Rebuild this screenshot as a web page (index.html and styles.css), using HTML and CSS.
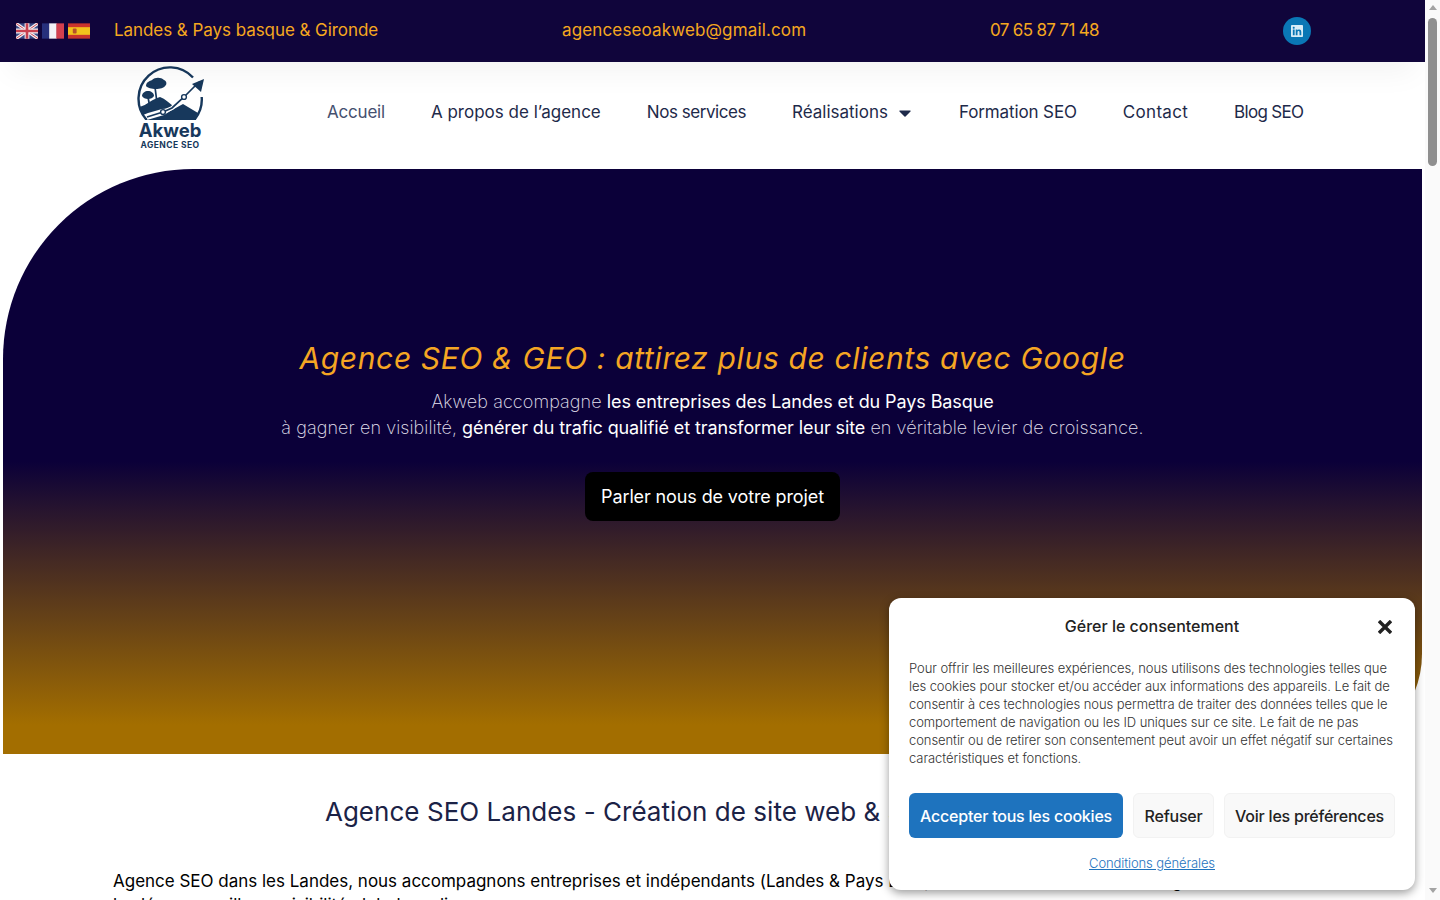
FILE: index.html
```html
<!DOCTYPE html>
<html lang="fr">
<head>
<meta charset="utf-8">
<title>Agence SEO Landes - Akweb</title>
<link rel="stylesheet" href="styles.css">
</head>
<body>
<div class="page">
  <div class="topbar">
    <div class="flags">
      <svg class="flag" viewBox="0 0 23 16"><rect width="23" height="16" fill="#3a4a86"/><path d="M0 0L23 16M23 0L0 16" stroke="#f3eef0" stroke-width="3.4"/><path d="M0 0L23 16M23 0L0 16" stroke="#c8404f" stroke-width="1"/><path d="M11.5 0V16M0 8H23" stroke="#f3eef0" stroke-width="5"/><path d="M11.5 0V16M0 8H23" stroke="#c8404f" stroke-width="2.8"/></svg>
      <svg class="flag" viewBox="0 0 23 16"><rect width="8" height="16" fill="#27307c"/><rect x="7.5" width="8" height="16" fill="#f3f2f6"/><rect x="15" width="8" height="16" fill="#d3404e"/></svg>
      <svg class="flag" viewBox="0 0 23 16"><rect width="23" height="16" fill="#c9342c"/><rect y="4" width="23" height="8" fill="#f2c21c"/><rect x="5" y="5.5" width="4" height="5" rx="1" fill="#b5512a"/></svg>
    </div>
    <span class="top-text top-place">Landes &amp; Pays basque &amp; Gironde</span>
    <span class="top-text top-mail">agenceseoakweb@gmail.com</span>
    <span class="top-text top-phone">07 65 87 71 48</span>
    <span class="linkedin"><svg viewBox="0 0 448 512"><path fill="#d8edf7" d="M416 32H31.9C14.3 32 0 46.5 0 64.3v383.4C0 465.5 14.3 480 31.9 480H416c17.6 0 32-14.5 32-32.3V64.3c0-17.8-14.4-32.3-32-32.3zM135.4 416H69V202.2h66.5V416zm-33.2-243c-21.3 0-38.5-17.3-38.5-38.5S80.9 96 102.2 96c21.2 0 38.5 17.3 38.5 38.5 0 21.3-17.2 38.5-38.5 38.5zm282.1 243h-66.4V312c0-24.8-.5-56.7-34.5-56.7-34.6 0-39.9 27-39.9 54.9V416h-66.4V202.2h63.7v29.2h.9c8.9-16.8 30.6-34.5 62.9-34.5 67.2 0 79.7 44.3 79.7 101.9V416z"/></svg></span>
  </div>

  <header class="header">
    <div class="logo">
      <svg class="logo-mark" viewBox="130 62 80 58">
        <path class="lg-ring" d="M193 77.5A31.3 31.3 0 0 0 146.8 120M194.2 120A31.3 31.3 0 0 0 201.7 97"/>
        <path class="lg-fill" d="M146 86C146 82 150 81 152 80C155 77 161 77 164 80C167 81 167 85 165 86C163 90 149 90 146 86Z"/>
        <path class="lg-fill" d="M142 96C142 93 145 91 148 91C151 91 154 93 154 96C152 100 144 100 142 96Z"/>
        <path class="lg-line" d="M155 87L157 103M148 97L150 108"/>
        <path class="lg-fill" d="M139.500 107C147 105 152 99 160 97C165 99 170 103 175 108L162 109L148 113L143 115Z"/>
        <path class="lg-fill" d="M147 120L164 115L172 110L183 104L198 113L194 120Z"/>
        <path class="lg-halo" d="M147 117L163 112L172 108L184 97L199 82"/>
        <path class="lg-line" d="M147 117L163 112L172 108L184 97L199 82"/>
        <circle class="lg-node" cx="163" cy="112" r="2.4"/>
        <circle class="lg-node" cx="184" cy="97" r="2.4"/>
        <path class="lg-fill" d="M204 79L192 84L201 92Z"/>
      </svg>
      <span class="logo-name">Akweb</span>
      <span class="logo-sub">AGENCE SEO</span>
    </div>
    <nav class="nav">
      <a class="nav-item nav-active">Accueil</a>
      <a class="nav-item">A propos de l’agence</a>
      <a class="nav-item nav-services">Nos services</a>
      <a class="nav-item">Réalisations<svg class="caret" viewBox="0 0 12 7"><path d="M1 0.5H11C11.6 0.5 11.9 1.2 11.5 1.6L6.5 6.4C6.2 6.7 5.8 6.7 5.500 6.4L0.5 1.6C0.1 1.2 0.4 0.5 1 0.5Z"/></svg></a>
      <a class="nav-item nav-formation">Formation SEO</a>
      <a class="nav-item nav-contact">Contact</a>
      <a class="nav-item nav-blog">Blog SEO</a>
    </nav>
  </header>

  <section class="hero">
    <h1 class="hero-title">Agence SEO &amp; GEO : attirez plus de clients avec Google</h1>
    <p class="hero-text">Akweb accompagne <strong>les entreprises des Landes et du Pays Basque</strong><br>à gagner en visibilité, <strong>générer du trafic qualifié et transformer leur site</strong> en véritable levier de croissance.</p>
    <a class="hero-btn">Parler nous de votre projet</a>
  </section>

  <section class="intro">
    <h2 class="intro-title">Agence SEO Landes - Création de site web &amp; SEO Pays Basque</h2>
    <p class="intro-text">Agence SEO dans les Landes, nous accompagnons entreprises et indépendants (Landes &amp; Pays Basque) à élever leur notoriété en ligne,<br>la clé : une meilleure visibilité globale en ligne</p>
  </section>

  <aside class="consent">
    <div class="consent-head">
      <span class="consent-title">Gérer le consentement</span>
      <svg class="consent-close" viewBox="0 0 14 14"><path d="M1 1L13 13M13 1L1 13"/></svg>
    </div>
    <p class="consent-text">Pour offrir les meilleures expériences, nous utilisons des technologies telles que<br>les cookies pour stocker et/ou accéder aux informations des appareils. Le fait de<br>consentir à ces technologies nous permettra de traiter des données telles que le<br>comportement de navigation ou les ID uniques sur ce site. Le fait de ne pas<br>consentir ou de retirer son consentement peut avoir un effet négatif sur certaines<br>caractéristiques et fonctions.</p>
    <div class="consent-btns">
      <a class="btn btn-accept">Accepter tous les cookies</a>
      <a class="btn btn-deny">Refuser</a>
      <a class="btn btn-prefs">Voir les préférences</a>
    </div>
    <a class="consent-link">Conditions générales</a>
  </aside>
</div>

<div class="scrollbar">
  <span class="sb-up"></span>
  <span class="sb-thumb"></span>
  <span class="sb-down"></span>
</div>
</body>
</html>
```

FILE: styles.css
```css
* { box-sizing: border-box; }
html, body { margin: 0; height: 900px; overflow: hidden; background: #fff; }
body { display: flex; font-family: "Inter", "Liberation Sans", sans-serif; color: #000; }
.page { position: relative; width: 1425px; height: 900px; overflow: hidden; flex: none; }

/* scrollbar */
.scrollbar { width: 15px; flex: none; background: #fafafa; display: flex; flex-direction: column; align-items: center; height: 900px; }
.sb-up { width: 0; height: 0; margin-top: 5px; border: 4.5px solid transparent; border-top: 0; border-bottom: 5px solid #a3a3a3; }
.sb-thumb { width: 9px; height: 148px; margin-top: 8px; background: #8f8f8f; border-radius: 5px; }
.sb-down { width: 0; height: 0; margin-top: auto; margin-bottom: 7px; border: 4.5px solid transparent; border-bottom: 0; border-top: 5px solid #a3a3a3; }

/* top bar */
.topbar { position: relative; z-index: 2; height: 62px; background: #10053b; display: flex; align-items: center; padding-left: 16px; box-shadow: 0 20px 30px -10px rgba(0,0,0,.05); }
.flags { display: flex; gap: 4px; width: 98px; flex: none; }
.flag { width: 22px; height: 16px; display: block; filter: blur(.3px); }
.top-text { color: #f5a81f; font-size: 17px; white-space: nowrap; margin-top: -2px; }
.top-place { width: 448px; flex: none; letter-spacing: -.06px; }
.top-mail { width: 428px; flex: none; letter-spacing: .14px; }
.top-phone { width: 293px; flex: none; letter-spacing: -.66px; }
.linkedin { width: 28px; height: 28px; border-radius: 50%; background: #0a77b5; display: flex; align-items: center; justify-content: center; flex: none; }
.linkedin svg { width: 12px; height: 14px; display: block; }

/* header */
.header { height: 107px; background: #fff; display: flex; padding-left: 130px; }
.logo { width: 80px; flex: none; display: flex; flex-direction: column; align-items: center; color: #17385c; }
.logo-mark { width: 80px; height: 58px; display: block; flex: none; }
.lg-ring { fill: none; stroke: #17385c; stroke-width: 2.4; }
.lg-fill { fill: #17385c; }
.lg-line { fill: none; stroke: #17385c; stroke-width: 1.7; }
.lg-halo { fill: none; stroke: #fff; stroke-width: 4; }
.lg-node { fill: #fff; stroke: #17385c; stroke-width: 1.4; }
.logo-name { font-size: 18.5px; line-height: 19px; font-weight: 700; margin-top: 1px; }
.logo-sub { font-size: 8.5px; line-height: 10px; font-weight: 700; letter-spacing: .05em; }
.nav { display: flex; gap: 46px; margin-left: 117px; height: 100px; align-items: center; }
.nav-item { font-size: 17px; color: #1e2a4a; white-space: nowrap; display: flex; align-items: center; }
.nav-active { color: #45506f; letter-spacing: -.2px; }
.nav-services { letter-spacing: -.45px; }
.nav-formation { letter-spacing: -.12px; }
.nav-contact { letter-spacing: .3px; }
.nav-blog { letter-spacing: -.7px; }
.caret { width: 12px; height: 7px; margin: 2px 2px 0 11px; fill: #1e2a4a; display: block; }

/* hero */
.hero { height: 585px; margin: 0 3px; padding-top: 171px; border-radius: 190px 0 100px 0; background: linear-gradient(180deg, #0b0039 0%, #0b0039 50%, #a36e00 95%); display: flex; flex-direction: column; align-items: center; }
.hero-title { margin: 0; font-size: 30px; line-height: 36px; font-weight: 400; font-style: italic; color: #f5a623; white-space: nowrap; letter-spacing: .64px; }
.hero-text { margin: 13px 0 0; font-size: 18px; line-height: 26px; font-weight: 200; color: #e6e3f0; text-align: center; white-space: nowrap; letter-spacing: .08px; }
.hero-text strong { font-weight: 400; color: #fff; letter-spacing: -.1px; }
.hero-btn { margin-top: 31px; width: 255px; height: 49px; background: #000; color: #fff; border-radius: 8px; font-size: 18px; display: flex; align-items: center; justify-content: center; white-space: nowrap; letter-spacing: -.12px; }

/* intro */
.intro { padding: 41px 113px 0; }
.intro-title { margin: 0; padding-left: 6px; font-size: 26px; line-height: 34px; font-weight: 400; color: #1b2246; text-align: center; white-space: nowrap; letter-spacing: .04px; }
.intro-text { margin: 40px 0 0; font-size: 17px; line-height: 24px; white-space: nowrap; letter-spacing: -.01px; }

/* consent */
.consent { position: absolute; right: 10px; bottom: 10px; width: 526px; height: 292px; background: #fff; border-radius: 12px; box-shadow: 0 3px 10px rgba(0,0,0,.4); padding: 0 20px; display: flex; flex-direction: column; color: #222; z-index: 5; }
.consent-head { height: 56px; display: flex; align-items: center; justify-content: center; position: relative; }
.consent-title { font-size: 16px; font-weight: 500; }
.consent-close { position: absolute; right: 3px; top: 22px; width: 14px; height: 14px; fill: none; stroke: #222; stroke-width: 3.4; }
.consent-text { margin: 5px 0 0; font-size: 13px; line-height: 18px; font-weight: 300; white-space: nowrap; color: #333; letter-spacing: -.07px; }
.consent-btns { display: flex; gap: 10px; margin-top: 26px; }
.btn { height: 45px; border-radius: 6px; font-size: 16px; font-weight: 500; display: flex; align-items: center; justify-content: center; white-space: nowrap; letter-spacing: -.22px; }
.btn-accept { width: 214px; background: #1e73be; color: #fff; }
.btn-deny { width: 81px; background: #f9f9f9; border: 1px solid #f2f2f2; color: #222; }
.btn-prefs { width: 171px; background: #f9f9f9; border: 1px solid #f2f2f2; color: #222; }
.consent-link { margin-top: 17px; align-self: center; font-size: 13px; font-weight: 300; color: #1e73be; text-decoration: underline; letter-spacing: -.1px; }
```
